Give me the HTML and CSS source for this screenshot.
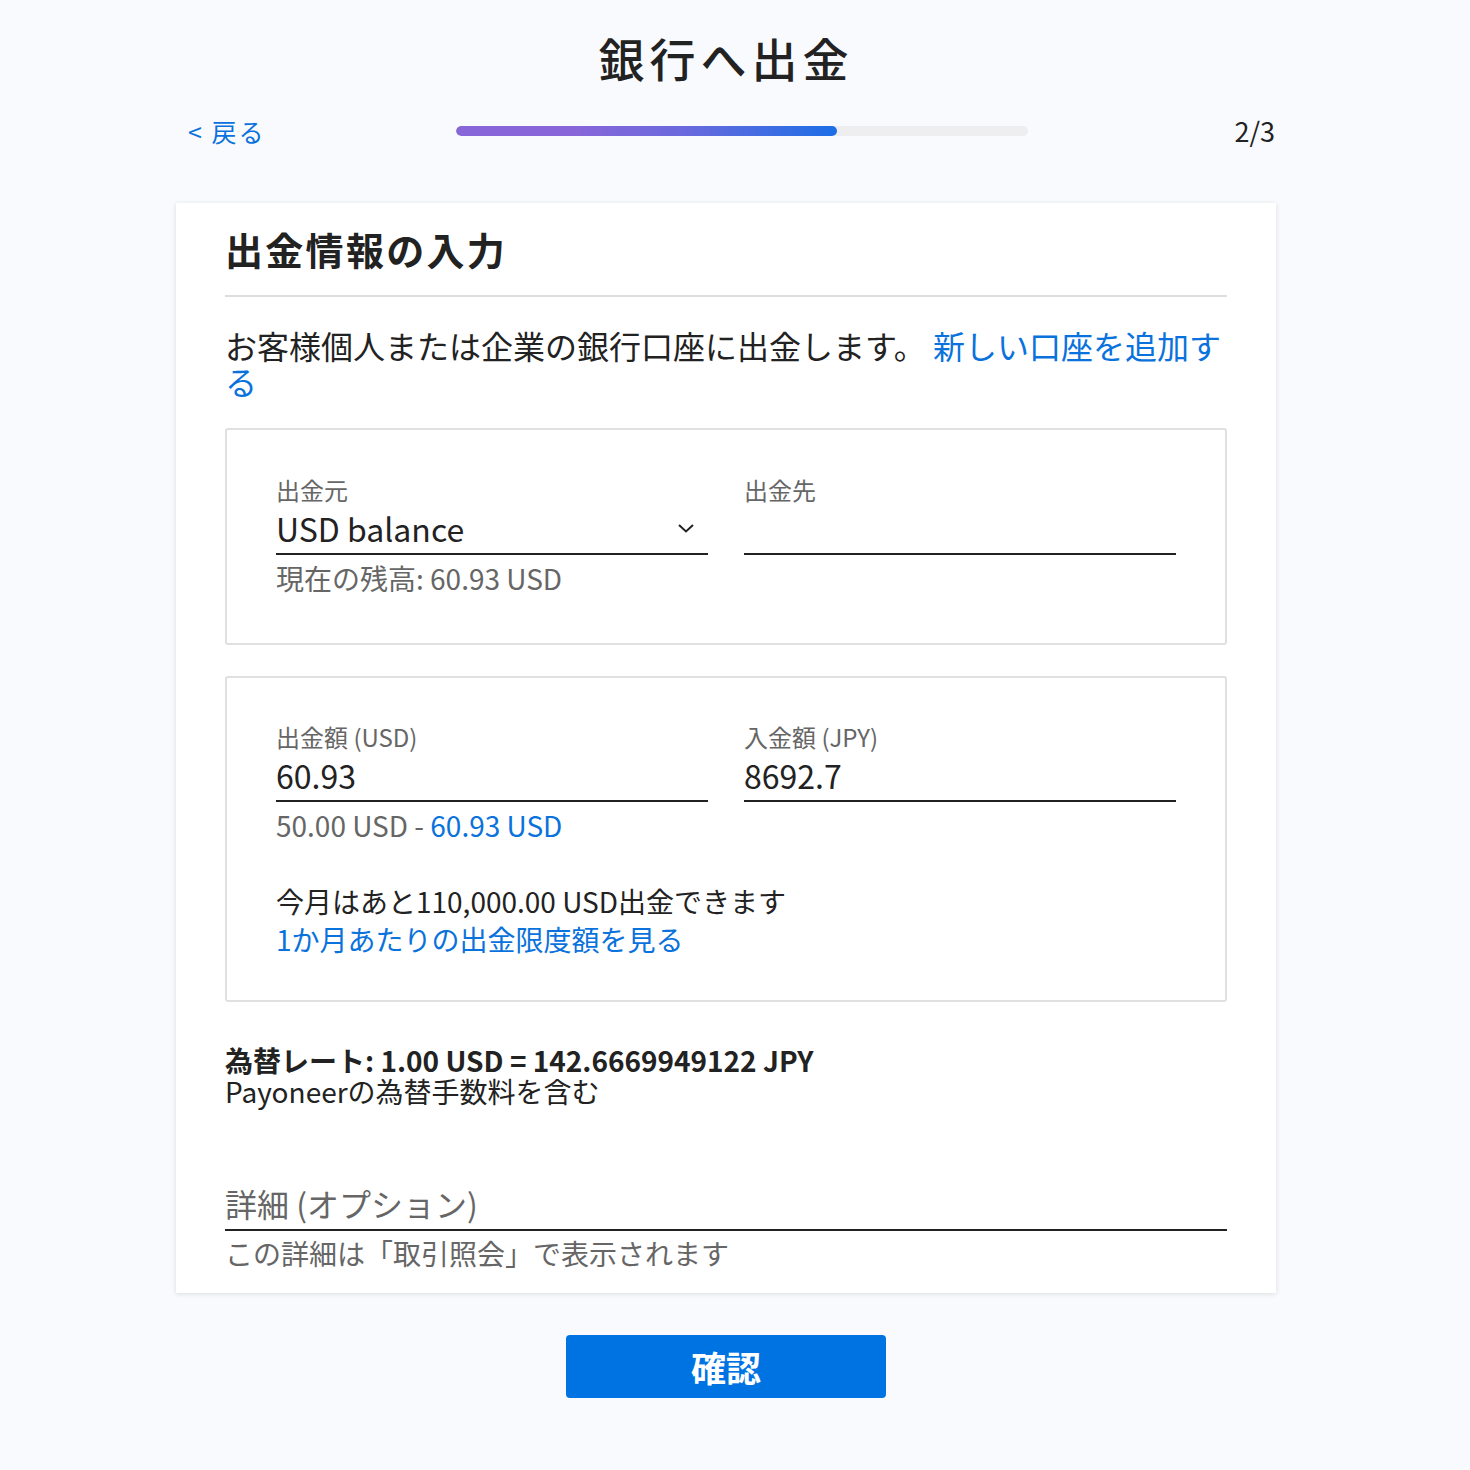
FILE: index.html
```html
<!DOCTYPE html>
<html lang="ja">
<head>
    <meta charset="UTF-8">
    <meta name="viewport" content="width=device-width, initial-scale=1.0">
    <title>銀行へ出金</title>
    <link rel="stylesheet" href="styles.css">
</head>
<body>
    <div class="page">
        <h1 class="page-title">銀行へ出金</h1>

        <!-- Step navigation -->
        <div class="step-nav">
            <a class="back-link" href="#">&lt; 戻る</a>
            <div class="progress">
                <div class="progress-fill" style="width: 66.6%;"></div>
            </div>
            <span class="step-count">2/3</span>
        </div>

        <!-- Withdraw form -->
        <div class="card">
            <h2 class="card-title">出金情報の入力</h2>
            <p class="intro">お客様個人または企業の銀行口座に出金します。 <a href="#">新しい口座を追加する</a></p>

            <div class="field-box">
                <div class="field-row">
                    <div class="field">
                        <label>出金元</label>
                        <div class="field-input select">
                            <span>USD balance</span>
                            <svg class="chevron" width="18" height="12" viewBox="0 0 18 12">
                                <path d="M2 3 L9 9.5 L16 3" fill="none" stroke="#222" stroke-width="2"/>
                            </svg>
                        </div>
                        <p class="hint">現在の残高: 60.93 USD</p>
                    </div>
                    <div class="field">
                        <label>出金先</label>
                        <div class="field-input"></div>
                    </div>
                </div>
            </div>

            <div class="field-box amounts">
                <div class="field-row">
                    <div class="field">
                        <label>出金額 (USD)</label>
                        <div class="field-input">60.93</div>
                        <p class="hint">50.00 USD - <a href="#">60.93 USD</a></p>
                    </div>
                    <div class="field">
                        <label>入金額 (JPY)</label>
                        <div class="field-input">8692.7</div>
                    </div>
                </div>
                <p class="limit">今月はあと110,000.00 USD出金できます</p>
                <a class="limit-link" href="#">1か月あたりの出金限度額を見る</a>
            </div>

            <div class="rate">
                <p class="rate-main">為替レート: 1.00 USD = 142.6669949122 JPY</p>
                <p>Payoneerの為替手数料を含む</p>
            </div>

            <div class="field details">
                <div class="field-input placeholder">詳細 (オプション)</div>
                <p class="hint">この詳細は「取引照会」で表示されます</p>
            </div>
        </div>

        <div class="actions">
            <button class="confirm">確認</button>
        </div>
    </div>
</body>
</html>
```

FILE: styles.css
```css
/* Reset */
body, h1, h2, p {
    margin: 0;
    padding: 0;
}

body {
    padding-right: 18px;
    background-color: #f9fafd;
    color: #222;
    font-family: "Noto Sans CJK JP", "Noto Sans", sans-serif;
}

a {
    color: #0a72dc;
    text-decoration: none;
}

.page {
    width: 1100px;
    margin: 0 auto;
}

/* Header */
.page-title {
    padding-top: 31px;
    font-size: 46px;
    line-height: 52px;
    font-weight: 500;
    letter-spacing: 5px;
    text-align: center;
}

.step-nav {
    display: grid;
    grid-template-columns: 268px 572px 1fr;
    align-items: center;
    height: 30px;
    margin-top: 33px;
    padding-left: 12px;
}

.back-link {
    font-size: 25px;
    line-height: 30px;
    letter-spacing: 2px;
}

.progress {
    height: 10px;
    border-radius: 5px;
    background-color: #eeeef1;
    overflow: hidden;
}

.progress-fill {
    height: 100%;
    border-radius: 5px;
    background: linear-gradient(90deg, #8766d9 0%, #8866d9 30%, #6a69dd 60%, #1c6ee6 100%);
}

.step-count {
    text-align: right;
    font-size: 27px;
    line-height: 30px;
    padding-right: 1px;
}

/* Card */
.card {
    margin-top: 57px;
    padding: 0 49px 24px;
    background-color: #fff;
    box-shadow: 0 1px 5px rgba(0, 0, 0, 0.12);
}

.card-title {
    padding-top: 21px;
    padding-bottom: 21px;
    border-bottom: 2px solid #dedede;
    font-size: 38px;
    line-height: 50px;
    font-weight: 700;
    letter-spacing: 2.3px;
}

.intro {
    margin-top: 30px;
    font-size: 32px;
    line-height: 36px;
}

/* Field boxes */
.field-box {
    margin-top: 29px;
    padding: 45px 49px 49px;
    border: 2px solid #e0e0e0;
    border-radius: 3px;
}

.field-box.amounts {
    margin-top: 31px;
    padding-top: 44px;
    padding-bottom: 42px;
}

.field-row {
    display: grid;
    grid-template-columns: 1fr 1fr;
    gap: 36px;
}

.field label {
    display: block;
    color: #666;
    font-size: 24px;
    line-height: 30px;
}

.field-input {
    display: flex;
    align-items: center;
    justify-content: space-between;
    height: 40px;
    margin-top: 3px;
    padding-bottom: 5px;
    border-bottom: 2px solid #222;
    font-size: 32px;
    line-height: 40px;
}

.chevron {
    margin-right: 13px;
}

.hint {
    margin-top: 7px;
    color: #666;
    font-size: 28px;
    line-height: 32px;
}

.limit {
    margin-top: 41px;
    font-size: 28px;
    line-height: 38px;
}

.limit-link {
    display: block;
    font-size: 28px;
    line-height: 38px;
}

/* Exchange rate */
.rate {
    margin-top: 43px;
    font-size: 28px;
    line-height: 31px;
}

.rate-main {
    font-weight: 700;
}

.details {
    margin-top: 76px;
}

.details .field-input {
    padding-bottom: 6px;
}

.details .hint {
    margin-top: 6px;
}

.placeholder {
    color: #666;
}

/* Confirm button */
.actions {
    display: flex;
    justify-content: center;
    margin-top: 42px;
}

.confirm {
    width: 320px;
    height: 63px;
    border: none;
    border-radius: 4px;
    background-color: #0073e3;
    color: #fff;
    font-family: inherit;
    font-size: 35px;
    font-weight: 700;
    cursor: pointer;
}
```
